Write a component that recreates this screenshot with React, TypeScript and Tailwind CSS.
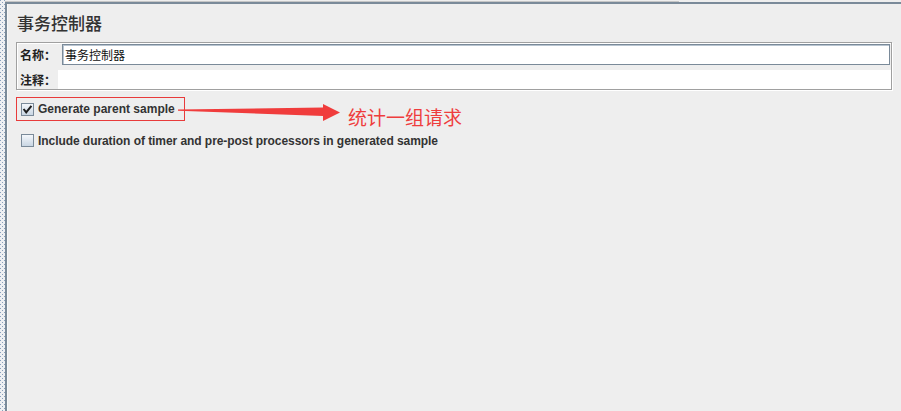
import React from "react";

const cjk = '"Noto Sans CJK SC", "Liberation Sans", sans-serif';
const latin = '"Liberation Sans", Arial, "Noto Sans CJK SC", sans-serif';

function CheckBox({ checked }: { checked: boolean }) {
  return (
    <div className="w-[13px] h-[13px] shrink-0 border border-[#7a8a99] bg-[linear-gradient(to_bottom,#f4f7fb,#c9d6e3)] flex items-center justify-center">
      {checked && (
        <svg width="11" height="11" viewBox="0 0 11 11">
          <path d="M2.2 5.8 L4.2 8.4 L8.8 2.6" fill="none" stroke="#1e1e1e" strokeWidth="2" strokeLinecap="square" />
        </svg>
      )}
    </div>
  );
}

export default function App() {
  return (
    <div
      className="relative w-[901px] h-[411px] bg-[#eeeeee] flex overflow-hidden text-[#333]"
      style={{ fontFamily: latin }}
    >
      {/* dotted left strip */}
      <svg width="5" height="411" className="shrink-0">
        <defs>
          <pattern id="dots" width="4" height="4" patternUnits="userSpaceOnUse">
            <rect width="4" height="4" fill="#eef0f3" />
            <rect x="0" y="0" width="1" height="1" fill="#8aa0bb" />
            <rect x="2" y="2" width="1" height="1" fill="#8aa0bb" />
          </pattern>
        </defs>
        <rect width="5" height="411" fill="url(#dots)" />
      </svg>

      <div className="flex-1 flex flex-col">
        {/* top band */}
        <div className="h-[2px] flex flex-col">
          <div className="h-[1px]" />
          <div className="h-[1px] w-[674px] bg-[#c6c6c6]" />
        </div>
        <div className="flex-1 border-t-2 border-l-2 border-[#7a8a99] flex">
          <div className="w-[1px] bg-[#f8f8f8]" />
          <div className="flex-1 flex flex-col relative">
            {/* title */}
            <div
              className="mt-[7px] pl-[9px] text-[17px] leading-[24px] font-medium text-[#333]"
              style={{ fontFamily: cjk }}
            >
              事务控制器
            </div>

            {/* name / comment box */}
            <div className="mt-[7px] ml-[8px] w-[876px] h-[48px] border border-[#a0a0a0] shadow-[1px_1px_0_#ffffff,inset_1px_1px_0_#ffffff] flex flex-col">
              <div className="mt-[1px] h-[21px] flex items-center">
                <div
                  className="w-[45px] pl-[3px] text-[12px] font-bold text-[#222]"
                  style={{ fontFamily: cjk }}
                >
                  名称：
                </div>
                <div
                  className="w-[828px] h-[21px] border border-[#7a8a99] bg-white shadow-[inset_1px_1px_0_#b8c4d0] flex items-center pl-[2px] text-[12px] text-[#111]"
                  style={{ fontFamily: cjk }}
                >
                  事务控制器
                </div>
              </div>
              <div className="mt-[5px] flex-1 flex items-center">
                <div
                  className="w-[41px] pl-[3px] text-[12px] font-bold text-[#222]"
                  style={{ fontFamily: cjk }}
                >
                  注释：
                </div>
                <div className="flex-1 h-full bg-white" />
              </div>
            </div>

            {/* checkbox row 1 with annotation */}
            <div className="mt-[7px] ml-[8px] h-[24px] flex items-start">
              <div className="w-[169px] h-[24px] shrink-0 border border-[#e83b3b] flex items-center pl-[4px] gap-[4px]">
                <CheckBox checked />
                <span className="text-[12px] font-bold text-[#333] leading-[14px]">
                  Generate parent sample
                </span>
              </div>
              <div
                className="ml-[163px] mt-[8px] text-[19px] leading-[24px] text-[#ee3d3d] whitespace-nowrap"
                style={{ fontFamily: cjk }}
              >
                统计一组请求
              </div>
            </div>

            {/* checkbox row 2 */}
            <div className="mt-[13px] ml-[13px] h-[13px] flex items-center gap-[4px]">
              <CheckBox checked={false} />
              <span className="text-[12px] font-bold text-[#333] leading-[14px] tracking-[-0.06px]">
                Include duration of timer and pre-post processors in generated sample
              </span>
            </div>
          </div>
        </div>
      </div>

      {/* red arrow annotation */}
      <svg
        className="absolute left-[176px] top-[102px]"
        width="166"
        height="22"
        viewBox="0 0 166 22"
      >
        <polygon
          points="2,7.6 147,5.5 147,2 164,10.5 147,19 147,14 2,8.8"
          fill="#f03c3c"
        />
      </svg>
    </div>
  );
}
